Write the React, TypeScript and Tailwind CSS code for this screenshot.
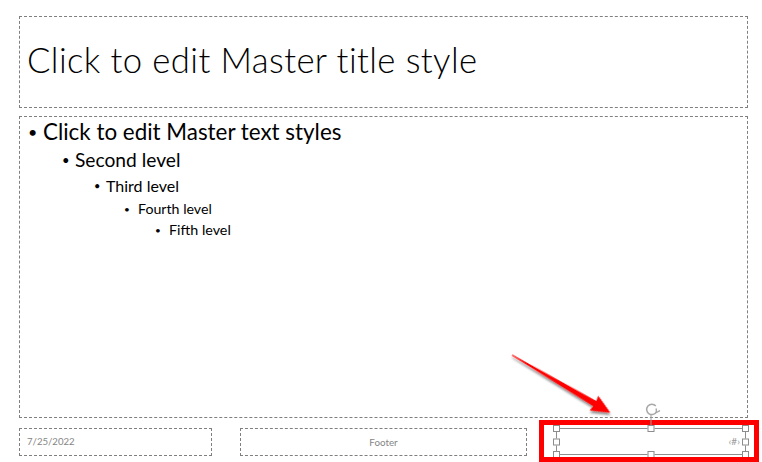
import React from "react";

const handle =
  "absolute w-[7px] h-[7px] bg-white border border-[#8c8c8c]";

export default function App() {
  return (
    <div className="relative w-[762px] h-[462px] bg-white overflow-hidden [font-family:Lato,'Open_Sans',sans-serif] text-black">
      <div className="pl-[19px] pt-[16px]">
        {/* Title placeholder */}
        <div className="w-[729px] h-[92px] border border-dashed border-[#7f7f7f] flex items-center pl-[7px] pb-[3px]">
          <span className="text-[34.7px] leading-none font-light tracking-[0.4px]">
            Click to edit Master title style
          </span>
        </div>

        {/* Body placeholder */}
        <div className="mt-[8px] w-[729px] h-[302px] border border-dashed border-[#7f7f7f] flex flex-col">
          <div className="flex items-center pl-[8px] h-[29px] text-[22.4px]">
            <span className="w-[15px] text-[16px]">•</span>
            <span>Click to edit Master text styles</span>
          </div>
          <div className="flex items-center pl-[42px] h-[29px] text-[19.2px]">
            <span className="w-[13px] text-[13px]">•</span>
            <span>Second level</span>
          </div>
          <div className="flex items-center pl-[74px] h-[22px] text-[16px]">
            <span className="w-[12px] text-[11px]">•</span>
            <span>Third level</span>
          </div>
          <div className="flex items-center pl-[104px] h-[24px] text-[14.2px]">
            <span className="w-[14px] text-[10px]">•</span>
            <span>Fourth level</span>
          </div>
          <div className="flex items-center pl-[135px] h-[18px] text-[14.3px]">
            <span className="w-[14px] text-[10px]">•</span>
            <span>Fifth level</span>
          </div>
        </div>

        {/* Footer row */}
        <div className="mt-[10px] flex items-start">
          <div className="w-[193px] h-[28px] border border-dashed border-[#7f7f7f] flex items-center pl-[7px] text-[9.6px] text-[#858585]">
            7/25/2022
          </div>
          <div className="ml-[28px] w-[287px] h-[28px] border border-dashed border-[#7f7f7f] flex items-center justify-center text-[9.8px] text-[#858585]">
            Footer
          </div>
          <div className="relative ml-[29px] w-[190px] h-[27px] border border-[#8f8f8f] flex items-center justify-end pr-[5px] text-[10px] text-[#9a9a9a]">
            ‹#›
            <span className={`${handle} -left-[4px] -top-[4px]`} />
            <span className={`${handle} left-1/2 -translate-x-1/2 -top-[4px]`} />
            <span className={`${handle} -right-[4px] -top-[4px]`} />
            <span className={`${handle} -left-[4px] top-1/2 -translate-y-1/2`} />
            <span className={`${handle} -right-[4px] top-1/2 -translate-y-1/2`} />
            <span className={`${handle} -left-[4px] -bottom-[4px]`} />
            <span className={`${handle} left-1/2 -translate-x-1/2 -bottom-[4px]`} />
            <span className={`${handle} -right-[4px] -bottom-[4px]`} />
          </div>
        </div>
      </div>

      {/* Annotation: red highlight box */}
      <div className="absolute left-[539px] top-[420px] w-[220px] h-[42px] border-[5px] border-[#ff0000] pointer-events-none" />

      {/* Annotation: arrow + rotation handle */}
      <svg
        className="absolute left-0 top-0 pointer-events-none"
        width="762"
        height="462"
        viewBox="0 0 762 462"
      >
        <defs>
          <filter id="sh" x="-20%" y="-20%" width="140%" height="140%">
            <feDropShadow dx="1.5" dy="2" stdDeviation="1.2" floodColor="#000" floodOpacity="0.45" />
          </filter>
        </defs>
        <g transform="translate(512 355) rotate(30.4)" filter="url(#sh)">
          <polygon
            points="0,-0.6 96,-3 95,-8.5 114,0 95,8.5 96,3 0,0.6"
            fill="#ff0000"
          />
        </g>
        {/* rotation handle */}
        <line x1="651" y1="415" x2="651" y2="425" stroke="#a0a0a0" strokeWidth="1" />
        <path
          d="M656.6 411.5 A5.2 5.2 0 1 1 655.8 406"
          fill="none"
          stroke="#a8a8a8"
          strokeWidth="1.5"
        />
        <path d="M656.5 412.5 L659.5 410.8 M656.5 412.5 L656.2 409" fill="none" stroke="#a8a8a8" strokeWidth="1.4" strokeLinecap="round" />
      </svg>
    </div>
  );
}
